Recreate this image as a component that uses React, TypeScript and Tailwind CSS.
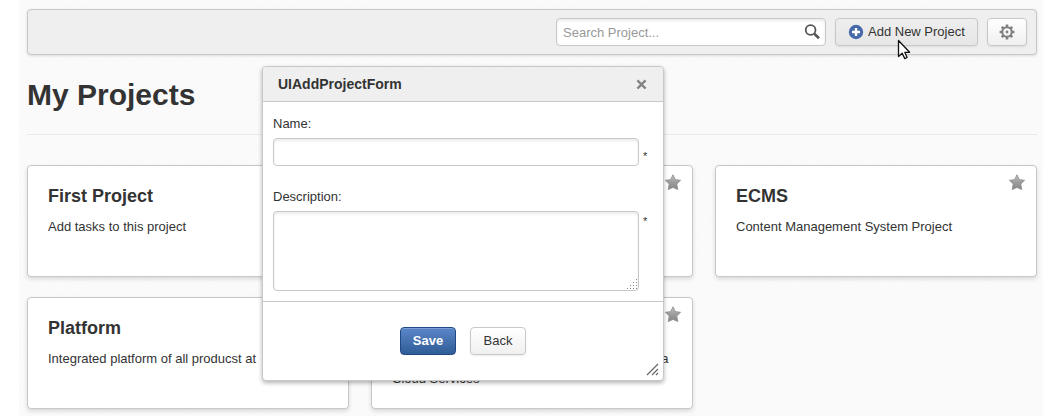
import React from "react";

type Project = { title: string; text: string };

const projects: Project[] = [
  { title: "First Project", text: "Add tasks to this project" },
  { title: "Social", text: "Social Network" },
  { title: "ECMS", text: "Content Management System Project" },
  { title: "Platform", text: "Integrated platform of all producst at" },
  { title: "IT", text: "All of these projects and utilities are offered as a Cloud Services" },
];

function Star() {
  return (
    <svg width="18" height="17" viewBox="0 0 18 17" aria-hidden="true">
      <defs>
        <linearGradient id="star" x1="0" y1="0" x2="0" y2="1">
          <stop offset="0" stopColor="#c4c4c4" />
          <stop offset="0.45" stopColor="#a0a0a0" />
          <stop offset="1" stopColor="#858585" />
        </linearGradient>
      </defs>
      <path
        d="M9 .8 11.3 5.6 16.6 6.3 12.8 10 13.8 15.6 9 13.4 4.2 15.6 5.2 10 1.4 6.3 6.7 5.6Z"
        fill="url(#star)"
        stroke="#8c8c8c"
        strokeWidth="0.8"
        strokeLinejoin="round"
      />
    </svg>
  );
}

function Card({ title, text }: Project) {
  return (
    <article className="relative h-28 rounded border border-[#c8c8c8] bg-white px-5 pt-5 shadow-[0_2px_4px_rgba(0,0,0,0.14)]">
      <h2 className="text-lg leading-5 font-bold">{title}</h2>
      <p className="mt-[11px] leading-5">{text}</p>
      <button type="button" aria-label={`Star ${title}`} className="absolute top-2 right-2.5">
        <Star />
      </button>
    </article>
  );
}

function Gear() {
  return (
    <svg width="16" height="16" viewBox="0 0 16 16" aria-hidden="true" fill="none" stroke="#808080">
      <circle cx="8" cy="8" r="4.7" strokeWidth="2" />
      <circle cx="8" cy="8" r="1.4" fill="#808080" stroke="none" />
      <path
        d="M8 .6v2.4M8 13v2.4M.6 8H3M13 8h2.4M2.8 2.8l1.7 1.7M11.5 11.5l1.7 1.7M2.8 13.2l1.7-1.7M11.5 4.5l1.7-1.7"
        strokeWidth="2.6"
      />
    </svg>
  );
}

function Toolbar() {
  return (
    <header className="flex justify-end gap-[9px] rounded border border-[#c8c8c8] bg-[#efefef] p-2 pr-[9px] shadow-[0_1px_3px_rgba(0,0,0,0.12)]">
      <div className="relative w-[270px]">
        <input
          type="text"
          aria-label="Search Project"
          placeholder="Search Project..."
          className="block h-7 w-full rounded border border-[#c8c8c8] bg-white pr-7 pl-1.5 shadow-[inset_0_2px_3px_rgba(0,0,0,0.08)] placeholder:text-[#999]"
        />
        <button type="button" aria-label="Search" className="absolute top-1.5 right-[5px]">
          <svg width="17" height="16" viewBox="0 0 17 16" aria-hidden="true" fill="none" stroke="#555">
            <circle cx="6.6" cy="6" r="4.9" strokeWidth="1.8" />
            <path d="M10.3 9.7 15 14.2" strokeWidth="2.6" />
          </svg>
        </button>
      </div>
      <button
        type="button"
        className="relative flex h-7 w-[143px] items-center gap-1 rounded border border-[#c8c8c8] bg-gradient-to-b from-[#eeeeee] to-[#e6e6e6] pl-3 whitespace-nowrap shadow-[0_1px_2px_rgba(0,0,0,0.08)]"
      >
        <svg width="16" height="16" viewBox="0 0 16 16" aria-hidden="true">
          <circle cx="8" cy="8" r="7.2" fill="#4669ac" />
          <path d="M8 4v8M4 8h8" stroke="#fff" strokeWidth="2.4" />
        </svg>
        Add New Project
        <svg
          className="absolute top-5 left-[61px]"
          width="15"
          height="22"
          viewBox="0 0 15 22"
          aria-hidden="true"
        >
          <path
            d="M1.5 1.5V17.5L5.2 14.2 7.8 19.6 10.1 18.5 7.8 13.3H12.6Z"
            fill="#fff"
            stroke="#111"
            strokeWidth="1.3"
            strokeLinejoin="round"
          />
        </svg>
      </button>
      <button
        type="button"
        aria-label="Settings"
        className="flex h-7 w-10 items-center justify-center rounded border border-[#c8c8c8] bg-gradient-to-b from-white to-[#f0f0f0] shadow-[0_1px_2px_rgba(0,0,0,0.08)]"
      >
        <Gear />
      </button>
    </header>
  );
}

function AddProjectDialog() {
  return (
    <form
      role="dialog"
      aria-labelledby="dialog-title"
      onSubmit={(e) => e.preventDefault()}
      className="absolute top-[66px] left-[243px] w-[402px] rounded border border-[#c8c8c8] bg-white shadow-[0_2px_4px_rgba(0,0,0,0.3)]"
    >
      <div className="flex h-[35px] items-center justify-between rounded-t border-b border-[#c8c8c8] bg-[#efefef] pr-4 pl-[15px]">
        <h2 id="dialog-title" className="text-sm font-bold">
          UIAddProjectForm
        </h2>
        <button type="button" aria-label="Close">
          <svg width="11" height="11" viewBox="0 0 11 11" aria-hidden="true">
            <path d="M1.4 2.4 9.6 10.4M9.6 2.4 1.4 10.4" stroke="#fff" strokeWidth="2.4" />
            <path d="M1.4 1.4 9.6 9.6M9.6 1.4 1.4 9.6" stroke="#858585" strokeWidth="2.5" />
          </svg>
        </button>
      </div>
      <div className="px-2.5 pt-3 pb-2.5">
        <label htmlFor="name" className="block leading-5">
          Name:
        </label>
        <div className="mt-1 flex gap-1">
          <input
            id="name"
            type="text"
            className="h-7 w-[366px] rounded border border-[#c8c8c8] bg-white px-1.5 shadow-[inset_0_2px_3px_rgba(0,0,0,0.08)]"
          />
          <span className="pt-2 text-[11px] leading-5">*</span>
        </div>
        <label htmlFor="description" className="mt-[21px] block leading-5">
          Description:
        </label>
        <div className="mt-1 flex gap-1">
          <div className="relative w-[366px]">
            <textarea
              id="description"
              className="block h-20 w-full resize-none rounded border border-[#c8c8c8] bg-white px-1.5 py-1 shadow-[inset_0_2px_3px_rgba(0,0,0,0.08)]"
            />
            <svg
              className="absolute right-px bottom-px"
              width="11"
              height="11"
              viewBox="0 0 11 11"
              aria-hidden="true"
              fill="#888"
            >
              <path d="M9 0h1v1H9zM9 3h1v1H9zM6 3h1v1H6zM9 6h1v1H9zM6 6h1v1H6zM3 6h1v1H3zM9 9h1v1H9zM6 9h1v1H6zM3 9h1v1H3zM0 9h1v1H0z" />
            </svg>
          </div>
          <span className="text-[11px] leading-5">*</span>
        </div>
      </div>
      <div className="flex justify-center gap-3.5 border-t border-[#c8c8c8] py-[25px]">
        <button
          type="submit"
          className="h-7 w-14 rounded border border-[#224886] bg-gradient-to-b from-[#5b86cb] to-[#2f5d96] font-bold text-white shadow-[inset_0_1px_0_rgba(255,255,255,0.2)]"
        >
          Save
        </button>
        <button
          type="button"
          className="h-7 w-14 rounded border border-[#c8c8c8] bg-gradient-to-b from-white to-[#f0f0f0] shadow-[0_1px_2px_rgba(0,0,0,0.08)]"
        >
          Back
        </button>
      </div>
      <svg
        className="absolute right-1 bottom-1"
        width="13"
        height="13"
        viewBox="0 0 13 13"
        aria-hidden="true"
        stroke="#666"
        strokeWidth="1.2"
      >
        <path d="M1 12 12 1M6 12 12 6M10 12 12 10" />
      </svg>
    </form>
  );
}

export default function App() {
  return (
    <div className="min-h-screen bg-white px-[19px] font-['Liberation_Sans',Arial,sans-serif] text-[13px] text-[#333]">
      <main className="relative min-h-screen bg-[repeating-linear-gradient(135deg,#fbfbfb_0px,#fbfbfb_2px,#f8f8f8_2px,#f8f8f8_3px)] pt-[9px] pr-1.5 pb-[7px] pl-2">
        <Toolbar />
        <h1 className="mt-5 border-b border-[#eaeaea] pb-[19px] text-[30px] leading-10 font-bold">My Projects</h1>
        <section className="mt-[30px] grid grid-cols-3 gap-x-[22px] gap-y-5">
          {projects.map((project) => (
            <Card key={project.title} {...project} />
          ))}
        </section>
        <AddProjectDialog />
      </main>
    </div>
  );
}
